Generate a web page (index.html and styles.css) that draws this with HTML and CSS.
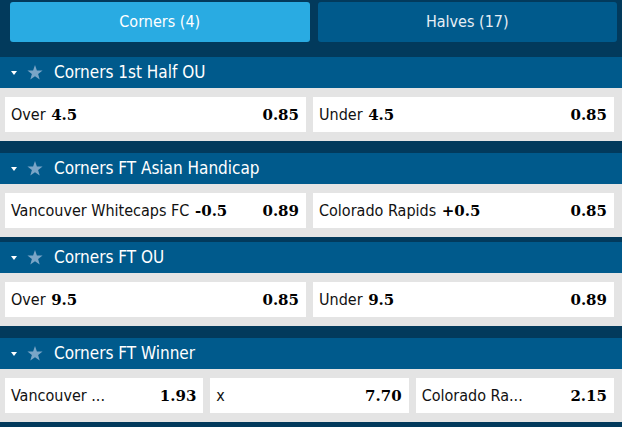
FILE: index.html
```html
<!DOCTYPE html>
<html lang="en">
<head>
<meta charset="utf-8">
<title>Corners markets</title>
<link rel="stylesheet" href="styles.css">
</head>
<body>
<div class="page">
  <nav class="tabs">
    <div class="tab tab-active">Corners (4)</div>
    <div class="tab">Halves (17)</div>
  </nav>

  <section class="market">
    <header class="market-head">
      <span class="caret"></span>
      <svg class="star" viewBox="0 0 16 15" aria-hidden="true"><path d="M8 0 L9.9 5.4 L15.6 5.5 L11.1 9 L12.7 14.6 L8 11.3 L3.3 14.6 L4.9 9 L0.4 5.5 L6.1 5.4 Z"/></svg>
      <span class="market-title">Corners 1st Half OU</span>
    </header>
    <div class="market-body cols-2">
      <div class="sel"><span class="sel-name">Over <b class="line">4.5</b></span><span class="odds">0.85</span></div>
      <div class="sel"><span class="sel-name">Under <b class="line">4.5</b></span><span class="odds">0.85</span></div>
    </div>
  </section>

  <section class="market gap-12">
    <header class="market-head">
      <span class="caret"></span>
      <svg class="star" viewBox="0 0 16 15" aria-hidden="true"><path d="M8 0 L9.9 5.4 L15.6 5.5 L11.1 9 L12.7 14.6 L8 11.3 L3.3 14.6 L4.9 9 L0.4 5.5 L6.1 5.4 Z"/></svg>
      <span class="market-title">Corners FT Asian Handicap</span>
    </header>
    <div class="market-body cols-2">
      <div class="sel"><span class="sel-name">Vancouver Whitecaps FC <b class="line">-0.5</b></span><span class="odds">0.89</span></div>
      <div class="sel"><span class="sel-name">Colorado Rapids <b class="line">+0.5</b></span><span class="odds">0.85</span></div>
    </div>
  </section>

  <section class="market gap-5">
    <header class="market-head">
      <span class="caret"></span>
      <svg class="star" viewBox="0 0 16 15" aria-hidden="true"><path d="M8 0 L9.9 5.4 L15.6 5.5 L11.1 9 L12.7 14.6 L8 11.3 L3.3 14.6 L4.9 9 L0.4 5.5 L6.1 5.4 Z"/></svg>
      <span class="market-title">Corners FT OU</span>
    </header>
    <div class="market-body cols-2">
      <div class="sel"><span class="sel-name">Over <b class="line">9.5</b></span><span class="odds">0.85</span></div>
      <div class="sel"><span class="sel-name">Under <b class="line">9.5</b></span><span class="odds">0.89</span></div>
    </div>
  </section>

  <section class="market gap-12">
    <header class="market-head">
      <span class="caret"></span>
      <svg class="star" viewBox="0 0 16 15" aria-hidden="true"><path d="M8 0 L9.9 5.4 L15.6 5.5 L11.1 9 L12.7 14.6 L8 11.3 L3.3 14.6 L4.9 9 L0.4 5.5 L6.1 5.4 Z"/></svg>
      <span class="market-title">Corners FT Winner</span>
    </header>
    <div class="market-body cols-3">
      <div class="sel"><span class="sel-name">Vancouver ...</span><span class="odds">1.93</span></div>
      <div class="sel"><span class="sel-name">x</span><span class="odds">7.70</span></div>
      <div class="sel"><span class="sel-name">Colorado Ra...</span><span class="odds">2.15</span></div>
    </div>
  </section>
</div>
</body>
</html>
```

FILE: styles.css
```css
* { box-sizing: border-box; }

html, body {
  margin: 0;
  padding: 0;
  background: #023a5c;
}

body {
  font-family: "DejaVu Sans Condensed", "DejaVu Sans", sans-serif;
  width: 622px;
  height: 427px;
  overflow: hidden;
}

.page {
  display: flex;
  flex-direction: column;
}

.tabs {
  display: grid;
  grid-template-columns: 1fr 1fr;
  gap: 8px;
  padding: 2px 5px 15px 10px;
}

.tab {
  height: 40px;
  line-height: 40px;
  text-align: center;
  font-size: 16px;
  color: #e6eef5;
  background: #005a8c;
  border-radius: 3px;
}

.tab-active {
  background: #29abe2;
  color: #ffffff;
}

.market.gap-12 { margin-top: 12px; }
.market.gap-5 { margin-top: 5px; }

.market-head {
  height: 31px;
  display: flex;
  align-items: center;
  padding-left: 11px;
  background: #005a8c;
  color: #ffffff;
}

.caret {
  width: 0;
  height: 0;
  border-left: 3.5px solid transparent;
  border-right: 3.5px solid transparent;
  border-top: 4px solid #ffffff;
  margin-right: 10px;
  margin-top: 1px;
}

.star {
  width: 16px;
  height: 15px;
  fill: #7aa5c7;
  margin-right: 11px;
}

.market-title {
  font-size: 17px;
  line-height: 1;
}

.market-body {
  display: grid;
  gap: 7px;
  padding: 9px 8px 9px 5px;
  background: #e4e4e4;
}

.cols-2 { grid-template-columns: 1fr 1fr; }
.cols-3 { grid-template-columns: 1fr 1fr 1fr; }

.sel {
  height: 35px;
  display: flex;
  align-items: center;
  justify-content: space-between;
  padding: 0 7px 0 6px;
  background: #ffffff;
  color: #111111;
  font-size: 16px;
  white-space: nowrap;
}

.line,
.odds {
  font-family: "DejaVu Serif", serif;
  font-weight: bold;
  font-size: 15px;
  color: #000000;
}

.line { margin-left: 1px; }
```
